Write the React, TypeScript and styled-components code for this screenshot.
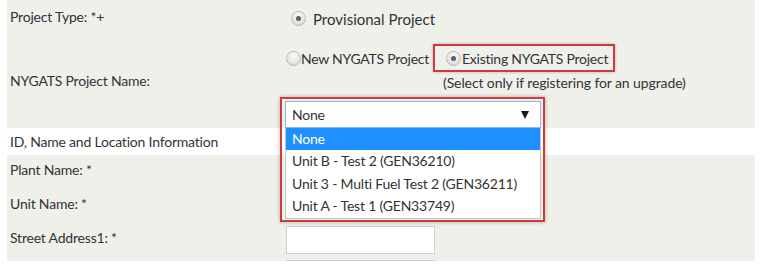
import { type FC } from "react";
import styled, { createGlobalStyle } from "styled-components";

const GlobalStyle = createGlobalStyle`
  body {
    margin: 0;
    background: #ffffff;
    font-family: Lato, "Open Sans", sans-serif;
    color: #333333;
  }
`;

const Page = styled.div`
  width: 772px;
  height: 270px;
  overflow: hidden;
  padding-left: 7px;
  box-sizing: border-box;
`;

const Panel = styled.section<{ $height: number }>`
  width: 748px;
  height: ${({ $height }) => $height}px;
  background: #f0f0eb;
  box-sizing: border-box;
  overflow: ${({ $height }) => ($height < 120 ? "hidden" : "visible")};
`;

const Row = styled.div<{ $height: number }>`
  display: grid;
  grid-template-columns: 279px 1fr;
  height: ${({ $height }) => $height}px;
  align-items: center;
`;

const Label = styled.div`
  padding-left: 3px;
  font-size: 14px;
  letter-spacing: -0.2px;
  line-height: 18px;
  margin-top: -5px;
`;

const SectionTitle = styled.div`
  height: 27px;
  padding-left: 3px;
  font-size: 14px;
  letter-spacing: -0.2px;
  line-height: 27px;
`;

const RadioDot = styled.span<{ $checked?: boolean }>`
  display: inline-block;
  flex: none;
  width: 13px;
  height: 13px;
  border-radius: 50%;
  border: 1px solid #b9b9b9;
  background: radial-gradient(circle at 50% 35%, #fbfbfb 0%, #dedede 70%, #cfcfcf 100%);
  box-shadow: inset 0 1px 1px rgba(255, 255, 255, 0.8);
  position: relative;
  &::after {
    content: "";
    display: ${({ $checked }) => ($checked ? "block" : "none")};
    position: absolute;
    left: 4px;
    top: 4px;
    width: 5px;
    height: 5px;
    border-radius: 50%;
    background: #5f5f5f;
  }
`;

const RadioOption = styled.label<{ $size: number; $gap: number }>`
  display: inline-flex;
  align-items: center;
  gap: ${({ $gap }) => $gap}px;
  font-size: ${({ $size }) => $size}px;
  letter-spacing: ${({ $size }) => ($size < 15 ? "-0.25px" : "0")};
  white-space: nowrap;
`;

const ValueCell = styled.div`
  align-self: stretch;
  display: flex;
  flex-direction: column;
`;

const ChoiceLine = styled.div`
  display: flex;
  align-items: center;
  margin-top: 5px;
  height: 28px;
`;

const Callout = styled.div`
  display: flex;
  align-items: center;
  height: 28px;
  margin-left: 4px;
  padding: 0 5px 0 11px;
  border: 2px solid #cf3a3a;
  box-sizing: border-box;
  box-shadow: 0 0 3px rgba(0, 0, 0, 0.25);
`;

const Note = styled.div`
  margin-left: 157px;
  margin-top: 1px;
  font-size: 14px;
  letter-spacing: -0.1px;
  line-height: 19px;
  white-space: nowrap;
`;

const SelectHolder = styled.div`
  position: relative;
  margin-top: 9px;
  width: 256px;
  height: 27px;
`;

const SelectCallout = styled.div`
  position: absolute;
  left: -6px;
  top: -4px;
  z-index: 2;
  padding: 2px 2px 1px 3px;
  border: 2px solid #cf3a3a;
  box-shadow: 0 0 4px rgba(0, 0, 0, 0.3);
`;

const SelectBox = styled.div`
  width: 256px;
  height: 27px;
  box-sizing: border-box;
  border: 1px solid #8fb3e6;
  background: #ffffff;
  display: flex;
  align-items: center;
  justify-content: space-between;
  padding: 0 11px 0 6px;
  font-size: 14px;
  letter-spacing: -0.2px;
`;

const Arrow = styled.span`
  width: 0;
  height: 0;
  border-left: 4px solid transparent;
  border-right: 4px solid transparent;
  border-top: 8px solid #1a1a1a;
`;

const OptionList = styled.ul`
  list-style: none;
  margin: 0;
  padding: 0 0 1px;
  width: 256px;
  box-sizing: border-box;
  background: #ffffff;
  border: 1px solid #c4c4c4;
  border-top: none;
`;

const OptionItem = styled.li<{ $active?: boolean }>`
  height: 22.3px;
  line-height: 22px;
  padding-left: 6px;
  font-size: 14px;
  letter-spacing: -0.2px;
  color: ${({ $active }) => ($active ? "#ffffff" : "#333333")};
  background: ${({ $active }) => ($active ? "#1e90ff" : "transparent")};
  white-space: nowrap;
`;

const TextInput = styled.div`
  width: 149px;
  height: 28px;
  box-sizing: border-box;
  border: 1px solid #cfcfcf;
  background: #ffffff;
`;

const projects = [
  "None",
  "Unit B - Test 2 (GEN36210)",
  "Unit 3 - Multi Fuel Test 2 (GEN36211)",
  "Unit A - Test 1 (GEN33749)",
];

const FieldRow: FC<{ label?: string; withInput?: boolean }> = ({ label, withInput }) => (
  <Row $height={34}>
    <Label>{label}</Label>
    <div>{withInput && <TextInput />}</div>
  </Row>
);

const App: FC = () => {
  return (
    <>
      <GlobalStyle />
      <Page>
        <Panel $height={128}>
          <Row $height={39}>
            <Label>Project Type: *+</Label>
            <div style={{ paddingLeft: 5, marginTop: 0 }}>
              <RadioOption $size={15} $gap={7}>
                <RadioDot $checked />
                Provisional Project
              </RadioOption>
            </div>
          </Row>
          <Row $height={89}>
            <Label>NYGATS Project Name:</Label>
            <ValueCell>
              <ChoiceLine>
                <RadioOption $size={14} $gap={0}>
                  <RadioDot />
                  New NYGATS Project
                </RadioOption>
                <Callout>
                  <RadioOption $size={14} $gap={1}>
                    <RadioDot $checked />
                    Existing NYGATS Project
                  </RadioOption>
                </Callout>
              </ChoiceLine>
              <Note>(Select only if registering for an upgrade)</Note>
              <SelectHolder>
                <SelectCallout>
                  <SelectBox>
                    None
                    <Arrow />
                  </SelectBox>
                  <OptionList>
                    {projects.map((p, i) => (
                      <OptionItem key={p} $active={i === 0}>
                        {p}
                      </OptionItem>
                    ))}
                  </OptionList>
                </SelectCallout>
              </SelectHolder>
            </ValueCell>
          </Row>
        </Panel>
        <SectionTitle>ID, Name and Location Information</SectionTitle>
        <Panel $height={106}>
          <FieldRow label="Plant Name: *" />
          <FieldRow label="Unit Name: *" />
          <FieldRow label="Street Address1: *" withInput />
          <FieldRow withInput />
        </Panel>
      </Page>
    </>
  );
};

export default App;
